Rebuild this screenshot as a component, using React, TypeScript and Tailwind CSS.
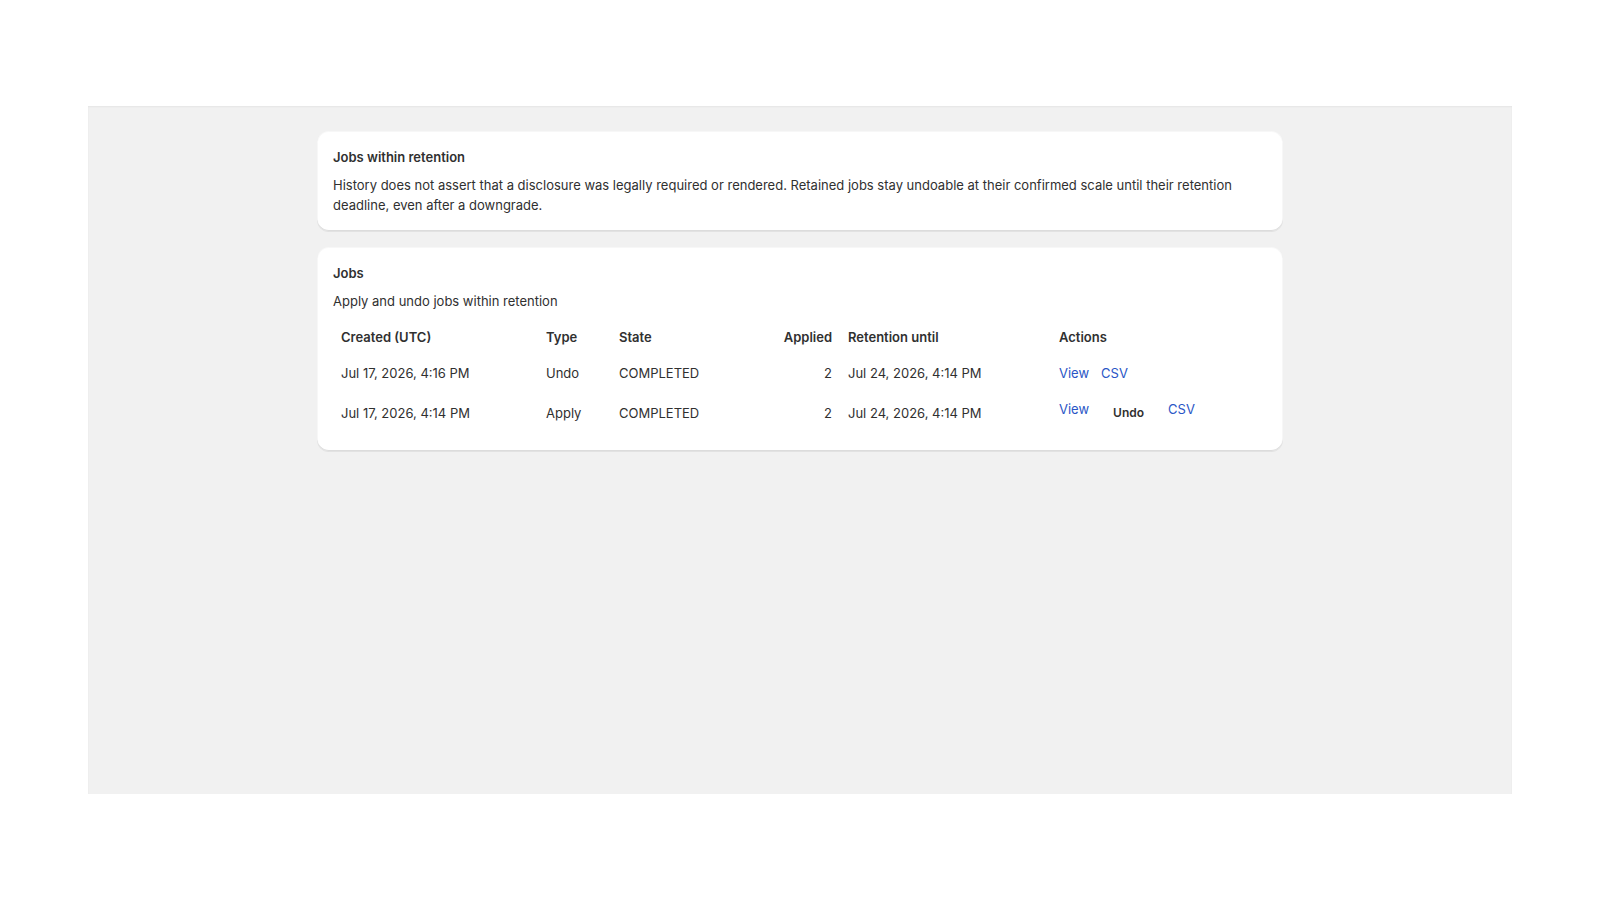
import React from "react";

type Job = {
  created: string;
  type: string;
  state: string;
  applied: number;
  retention: string;
  canUndo: boolean;
};

const jobs: Job[] = [
  { created: "Jul 17, 2026, 4:16 PM", type: "Undo", state: "COMPLETED", applied: 2, retention: "Jul 24, 2026, 4:14 PM", canUndo: false },
  { created: "Jul 17, 2026, 4:14 PM", type: "Apply", state: "COMPLETED", applied: 2, retention: "Jul 24, 2026, 4:14 PM", canUndo: true },
];

function Card({ children }: { children: React.ReactNode }) {
  return (
    <div className="bg-white rounded-xl p-4 shadow-[0_1px_0_0_rgba(26,26,26,0.07),inset_0_-1px_0_0_#dcdcdc,inset_0_0_0_1px_rgba(0,0,0,0.03)]">
      {children}
    </div>
  );
}

export default function App() {
  return (
    <div className="min-h-[900px] bg-white pt-[106px] pl-[88px] font-['Inter',sans-serif] text-[13px] leading-5 text-[#303030]">
      <div className="w-[1424px] h-[688px] bg-[#f1f1f1] shadow-[inset_0_1px_2px_rgba(0,0,0,0.05)]">
        <div className="max-w-[998px] mx-auto px-4 pt-[25px] flex flex-col gap-4">
          <Card>
            <div className="flex flex-col gap-2">
              <h2 className="font-semibold">Jobs within retention</h2>
              <p>
                History does not assert that a disclosure was legally required or rendered. Retained jobs stay
                undoable at their confirmed scale until their retention deadline, even after a downgrade.
              </p>
            </div>
          </Card>
          <Card>
            <div className="flex flex-col gap-2">
              <h2 className="font-semibold">Jobs</h2>
              <p>Apply and undo jobs within retention</p>
              <table className="w-full table-fixed border-collapse text-left">
                <thead>
                  <tr className="font-semibold">
                    <th className="w-[205px] p-2 font-semibold">Created (UTC)</th>
                    <th className="w-[73px] p-2 font-semibold">Type</th>
                    <th className="w-[164px] p-2 font-semibold">State</th>
                    <th className="w-[65px] p-2 font-semibold text-right">Applied</th>
                    <th className="w-[211px] p-2 font-semibold">Retention until</th>
                    <th className="p-2 font-semibold">Actions</th>
                  </tr>
                </thead>
                <tbody>
                  {jobs.map((job) => (
                    <tr key={job.created}>
                      <td className="p-2 align-middle">{job.created}</td>
                      <td className="p-2 align-middle">{job.type}</td>
                      <td className="p-2 align-middle">{job.state}</td>
                      <td className="p-2 align-middle text-right">{job.applied}</td>
                      <td className="p-2 align-middle">{job.retention}</td>
                      <td className="p-2 align-middle">
                        <div className="flex items-start gap-3">
                          <a className="text-[#2a56c6] cursor-pointer">View</a>
                          {job.canUndo && (
                            <button className="h-7 px-3 rounded-lg text-xs font-semibold text-[#303030] leading-4">
                              Undo
                            </button>
                          )}
                          <a className="text-[#2a56c6] cursor-pointer">CSV</a>
                        </div>
                      </td>
                    </tr>
                  ))}
                </tbody>
              </table>
            </div>
          </Card>
        </div>
      </div>
    </div>
  );
}
